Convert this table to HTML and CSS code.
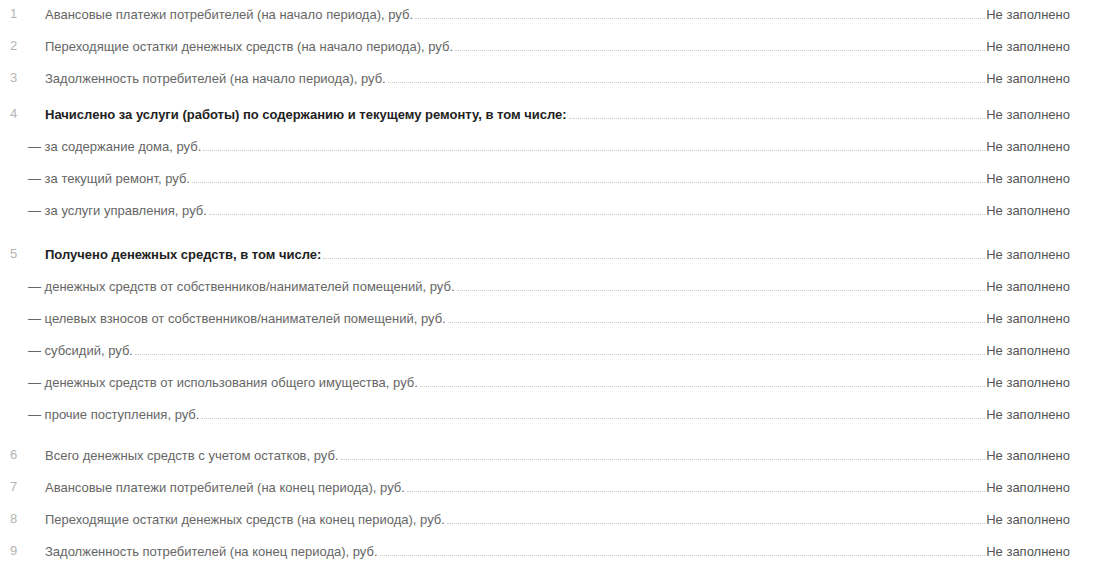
FILE: index.html
```html
<!DOCTYPE html>
<html lang="ru">
<head>
    <meta charset="UTF-8">
    <title>Отчет об исполнении сметы</title>
    <link rel="stylesheet" href="styles.css">
</head>
<body>
    <div class="report">
        <div class="row">
            <span class="num">1</span>
            <span class="label">Авансовые платежи потребителей (на начало периода), руб.</span>
            <span class="dots"></span>
            <span class="value">Не заполнено</span>
        </div>
        <div class="row">
            <span class="num">2</span>
            <span class="label">Переходящие остатки денежных средств (на начало периода), руб.</span>
            <span class="dots"></span>
            <span class="value">Не заполнено</span>
        </div>
        <div class="row">
            <span class="num">3</span>
            <span class="label">Задолженность потребителей (на начало периода), руб.</span>
            <span class="dots"></span>
            <span class="value">Не заполнено</span>
        </div>

        <div class="group">
            <div class="row">
                <span class="num">4</span>
                <span class="label bold">Начислено за услуги (работы) по содержанию и текущему ремонту, в том числе:</span>
                <span class="dots"></span>
                <span class="value">Не заполнено</span>
            </div>
            <div class="row sub">
                <span class="label">— за содержание дома, руб.</span>
                <span class="dots"></span>
                <span class="value">Не заполнено</span>
            </div>
            <div class="row sub">
                <span class="label">— за текущий ремонт, руб.</span>
                <span class="dots"></span>
                <span class="value">Не заполнено</span>
            </div>
            <div class="row sub">
                <span class="label">— за услуги управления, руб.</span>
                <span class="dots"></span>
                <span class="value">Не заполнено</span>
            </div>
        </div>

        <div class="group">
            <div class="row">
                <span class="num">5</span>
                <span class="label bold">Получено денежных средств, в том числе:</span>
                <span class="dots"></span>
                <span class="value">Не заполнено</span>
            </div>
            <div class="row sub">
                <span class="label">— денежных средств от собственников/нанимателей помещений, руб.</span>
                <span class="dots"></span>
                <span class="value">Не заполнено</span>
            </div>
            <div class="row sub">
                <span class="label">— целевых взносов от собственников/нанимателей помещений, руб.</span>
                <span class="dots"></span>
                <span class="value">Не заполнено</span>
            </div>
            <div class="row sub">
                <span class="label">— субсидий, руб.</span>
                <span class="dots"></span>
                <span class="value">Не заполнено</span>
            </div>
            <div class="row sub">
                <span class="label">— денежных средств от использования общего имущества, руб.</span>
                <span class="dots"></span>
                <span class="value">Не заполнено</span>
            </div>
            <div class="row sub">
                <span class="label">— прочие поступления, руб.</span>
                <span class="dots"></span>
                <span class="value">Не заполнено</span>
            </div>
        </div>

        <div class="row">
            <span class="num">6</span>
            <span class="label">Всего денежных средств с учетом остатков, руб.</span>
            <span class="dots"></span>
            <span class="value">Не заполнено</span>
        </div>
        <div class="row">
            <span class="num">7</span>
            <span class="label">Авансовые платежи потребителей (на конец периода), руб.</span>
            <span class="dots"></span>
            <span class="value">Не заполнено</span>
        </div>
        <div class="row">
            <span class="num">8</span>
            <span class="label">Переходящие остатки денежных средств (на конец периода), руб.</span>
            <span class="dots"></span>
            <span class="value">Не заполнено</span>
        </div>
        <div class="row">
            <span class="num">9</span>
            <span class="label">Задолженность потребителей (на конец периода), руб.</span>
            <span class="dots"></span>
            <span class="value">Не заполнено</span>
        </div>
    </div>
</body>
</html>
```

FILE: styles.css
```css
body {
    margin: 0;
    background-color: #fff;
    font-family: 'Liberation Sans', Arial, sans-serif;
    font-size: 13px;
    color: #666;
}

.report {
    padding: 0 27px 0 10px;
}

.row {
    display: flex;
    align-items: baseline;
    height: 32px;
    line-height: 29px;
}

.num {
    width: 35px;
    flex-shrink: 0;
    color: #b4b4b4;
    position: relative;
    top: -1px;
}

.sub {
    padding-left: 18px;
}

.label {
    white-space: nowrap;
}

.bold {
    font-weight: bold;
    color: #222;
}

.dots {
    flex: 1;
    height: 1px;
    margin: 0 1px 0 2px;
    border-bottom: 1px dotted #c8c8c8;
}

.value {
    white-space: nowrap;
    color: #555;
}

.group {
    margin-top: 4px;
    margin-bottom: 9px;
}

.group + .group {
    margin-top: 12px;
}
```
